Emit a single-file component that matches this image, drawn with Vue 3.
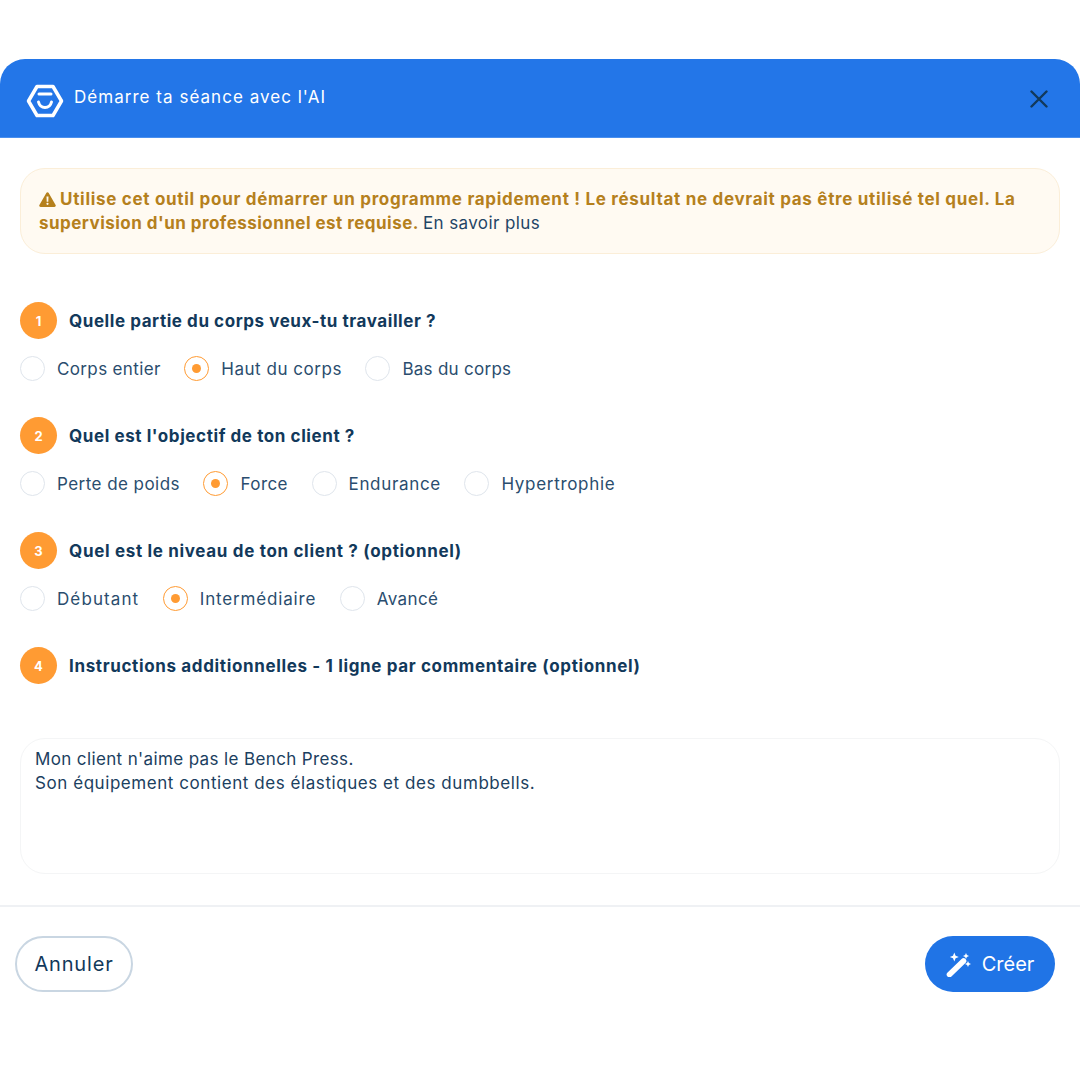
<script setup>
const steps = [
  { n: 1, title: 'Quelle partie du corps veux-tu travailler ?', ls: 0.56, selected: 1,
    options: [{ t: 'Corps entier', ls: 0.36 }, { t: 'Haut du corps', ls: 0.53 }, { t: 'Bas du corps', ls: 0.28 }] },
  { n: 2, title: "Quel est l'objectif de ton client ?", ls: 0.58, selected: 1,
    options: [{ t: 'Perte de poids', ls: 0.45 }, { t: 'Force', ls: 0.45 }, { t: 'Endurance', ls: 0.67 }, { t: 'Hypertrophie', ls: 0.7 }] },
  { n: 3, title: 'Quel est le niveau de ton client ? (optionnel)', ls: 0.67, selected: 1,
    options: [{ t: 'Débutant', ls: 1.1 }, { t: 'Intermédiaire', ls: 0.83 }, { t: 'Avancé', ls: 0.4 }] },
]
</script>

<template>
  <div class="page">
    <header class="header">
      <svg class="logo" width="38" height="34" viewBox="0 0 38 34" fill="none">
        <path d="M11 2.500h16L35.500 17 27 31.500H11L2.500 17z" stroke="#fff" stroke-width="3.500" stroke-linejoin="round" />
        <path d="M13 10h12" stroke="#fff" stroke-width="3" stroke-linecap="round" />
        <path d="M12.500 18c1 4 3.500 5.500 6.500 5.500s5.500-1.500 6.500-5.500" stroke="#fff" stroke-width="3" stroke-linecap="round" />
      </svg>
      <span class="header-title">Démarre ta séance avec l'AI</span>
      <svg class="close" width="18" height="18" viewBox="0 0 18 18" fill="none">
        <path d="M1.500 1.500l15 15M16.500 1.500l-15 15" stroke="#12395b" stroke-width="2.400" stroke-linecap="round" />
      </svg>
    </header>

    <main class="body">
      <div class="alert">
        <div class="alert-line">
          <svg class="warn" width="17" height="15" viewBox="0 0 17 15">
            <path fill-rule="evenodd" d="M8.500.300c.5 0 .9.300 1.200.700l6.900 11.900c.5.900-.1 2-1.200 2H1.600c-1.100 0-1.700-1.100-1.200-2L7.300 1c.3-.4.700-.7 1.200-.7zM7.500 4.500l.2 5.200h1.600l.2-5.200zM8.500 10.700a1.100 1.100 0 1 0 0 2.200 1.100 1.100 0 0 0 0-2.200z" fill="#b5801d" />
          </svg>
          <strong>Utilise cet outil pour démarrer un programme rapidement ! Le résultat ne devrait pas être utilisé tel quel. La</strong>
        </div>
        <div class="alert-line">
          <strong class="second">supervision d'un professionnel est requise.</strong>
          <span class="more">En savoir plus</span>
        </div>
      </div>

      <section v-for="step in steps" :key="step.n" class="step">
        <div class="step-head">
          <span class="num">{{ step.n }}</span>
          <span class="step-title" :style="{ letterSpacing: step.ls + 'px' }">{{ step.title }}</span>
        </div>
        <div class="options">
          <label v-for="(opt, i) in step.options" :key="opt.t" class="option">
            <span class="radio" :class="{ on: i === step.selected }"></span>
            <span class="opt-label" :style="{ letterSpacing: opt.ls + 'px' }">{{ opt.t }}</span>
          </label>
        </div>
      </section>

      <section class="step last">
        <div class="step-head">
          <span class="num">4</span>
          <span class="step-title four">Instructions additionnelles - 1 ligne par commentaire (optionnel)</span>
        </div>
      </section>

      <div class="textarea">
        <div class="ta-one">Mon client n'aime pas le Bench Press.</div>
        <div class="ta-two">Son équipement contient des élastiques et des dumbbells.</div>
      </div>
    </main>

    <footer class="footer">
      <button class="btn ghost">Annuler</button>
      <button class="btn primary">
        <svg width="26" height="26" viewBox="0 0 26 26" fill="#fff">
          <path d="M3.500 23.500 17.500 10" stroke="#fff" stroke-width="5.600" stroke-linecap="round" fill="none" />
          <path d="M8.300 1.500l1.300 3.200 3.200 1.300-3.200 1.300-1.300 3.200-1.300-3.200-3.200-1.300 3.200-1.300zM20 2l.9 2.100 2.100.9-2.100.9-.9 2.100-.9-2.100-2.100-.9 2.100-.9zM22 10l.9 2.100 2.100.9-2.100.9-.9 2.100-.9-2.100-2.100-.9 2.100-.9z" />
        </svg>
        <span>Créer</span>
      </button>
    </footer>
  </div>
</template>

<style>
html, body { margin: 0; background: #fff; }
</style>

<style scoped>
.page {
  width: 1080px;
  height: 1080px;
  padding-top: 59px;
  box-sizing: border-box;
  font-family: Inter, "Liberation Sans", sans-serif;
  color: #12395b;
  background: #fff;
}
.header {
  height: 79px;
  box-sizing: border-box;
  display: flex;
  align-items: center;
  gap: 10px;
  padding: 0 32px 0 26px;
  background: #2376e8;
  border-bottom: 1px solid #4a8fee;
  border-radius: 25px 25px 0 0;
}
.logo { margin-top: 6px; flex: none; }
.header-title { color: #fff; font-size: 17px; letter-spacing: 1.03px; flex: 1; margin-top: -3px; }
.close { margin-top: 1px; }
.body { padding: 30px 20px 0; }
.alert {
  box-sizing: border-box;
  height: 86px;
  padding: 18px 18px;
  line-height: 24px;
  font-size: 17px;
  background: #fffaf2;
  border: 1px solid #fbeed8;
  border-radius: 25px;
  color: #1f4566;
  margin-bottom: 48px;
}
.alert-line { display: flex; align-items: center; white-space: nowrap; }
.alert strong { color: #b5801d; font-weight: 700; letter-spacing: 0.7px; }
.alert strong.second { letter-spacing: 0.47px; }
.warn { margin-right: 4px; flex: none; }
.more { letter-spacing: 0.4px; margin-left: 4px; }
.step { margin-bottom: 36px; }
.step.last { margin-bottom: 54px; }
.step-head { display: flex; align-items: center; gap: 12px; height: 37px; }
.num {
  width: 37px; height: 37px; border-radius: 50%;
  background: #ff9b33; color: #fff;
  font-size: 13px; font-weight: 700;
  display: flex; align-items: center; justify-content: center;
}
.step-title { font-size: 17px; font-weight: 700; }
.step-title.four { letter-spacing: 0.64px; }
.options { display: flex; gap: 23.500px; margin-top: 17px; height: 25px; }
.option { display: flex; align-items: center; gap: 12px; }
.radio {
  width: 25px; height: 25px; box-sizing: border-box;
  border-radius: 50%;
  border: 1px solid #dfe5ec;
  background: #fff;
  display: flex; align-items: center; justify-content: center;
}
.radio.on { border-color: #ff9b33; }
.radio.on::after { content: ""; width: 9px; height: 9px; border-radius: 50%; background: #ff9b33; }
.opt-label { font-size: 17px; color: #2a4d6e; }
.textarea {
  box-sizing: border-box;
  height: 136px;
  padding: 8px 14px;
  line-height: 24px;
  font-size: 17px;
  border: 1px solid #f4f5f6;
  border-radius: 25px;
  color: #1b4060;
}
.ta-one { letter-spacing: 0.37px; }
.ta-two { letter-spacing: 0.56px; }
.footer {
  margin-top: 31px;
  border-top: 2px solid #eff1f4;
  padding: 29px 25px 0 15px;
  display: flex;
  justify-content: space-between;
}
.btn {
  height: 56px;
  border-radius: 28px;
  font-family: inherit;
  font-size: 20px;
  display: flex;
  align-items: center;
  justify-content: center;
  box-sizing: border-box;
}
.ghost { width: 118px; background: #fff; border: 2px solid #c9d6e2; color: #12395b; letter-spacing: 0.85px; }
.primary { width: 130px; background: #2074e6; border: 0; color: #fff; gap: 10px; }
</style>
